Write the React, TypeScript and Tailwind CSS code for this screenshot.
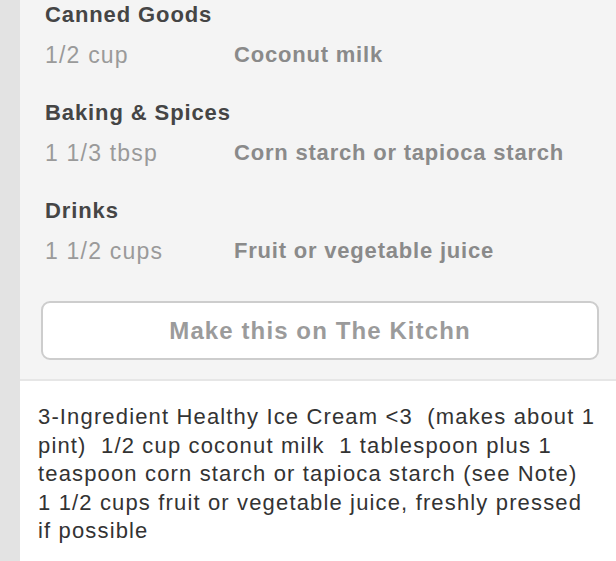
import React from 'react';

const groups = [
  { title: 'Canned Goods', qty: '1/2 cup', name: 'Coconut milk' },
  { title: 'Baking & Spices', qty: '1 1/3 tbsp', name: 'Corn starch or tapioca starch' },
  { title: 'Drinks', qty: '1 1/2 cups', name: 'Fruit or vegetable juice' },
];

// note text as wrapped on the device
const noteLines = [
  '3-Ingredient Healthy Ice Cream <3  (makes about 1',
  'pint)  1/2 cup coconut milk  1 tablespoon plus 1',
  'teaspoon corn starch or tapioca starch (see Note)',
  '1 1/2 cups fruit or vegetable juice, freshly pressed',
  'if possible',
];

export default function App() {
  return (
    <div
      className="flex h-[561px] w-[616px] overflow-hidden bg-[#e3e3e3]"
      style={{ fontFamily: '"Liberation Sans", Arial, sans-serif' }}
    >
      <div className="ml-[20px] flex flex-1 flex-col bg-white">
        {/* ingredient list */}
        <div className="border-b-2 border-[#e6e6e6] bg-[#f4f4f4] pb-[19px]">
          <div className="-mt-[5px] flex flex-col gap-[18px] pl-[25px]">
            {groups.map((g) => (
              <div key={g.title} className="flex flex-col">
                <div className="h-[40px] text-[22px] font-bold leading-[40px] tracking-[0.9px] text-[#454545]">
                  {g.title}
                </div>
                <div className="flex h-[40px] items-center text-[22px] leading-[40px]">
                  <span className="w-[189px] text-[23px] tracking-[1.2px] text-[#9a9a9a]">{g.qty}</span>
                  <span className="font-bold tracking-[0.8px] text-[#8a8a8a]">{g.name}</span>
                </div>
              </div>
            ))}
          </div>
          <div className="mt-[30px] pl-[21px] pr-[17px]">
            <button className="flex h-[59px] w-full items-center justify-center rounded-[9px] border-2 border-[#cdcdcd] bg-white text-[24px] font-bold tracking-[1.1px] text-[#9b9b9b]">
              Make this on The Kitchn
            </button>
          </div>
        </div>

        {/* recipe notes */}
        <div className="flex flex-col pl-[18px] pt-[22px] text-[22px] leading-[28.5px] tracking-[1.15px] text-[#333]">
          {noteLines.map((l) => (
            <div key={l} className="whitespace-pre">
              {l}
            </div>
          ))}
        </div>
      </div>
    </div>
  );
}
